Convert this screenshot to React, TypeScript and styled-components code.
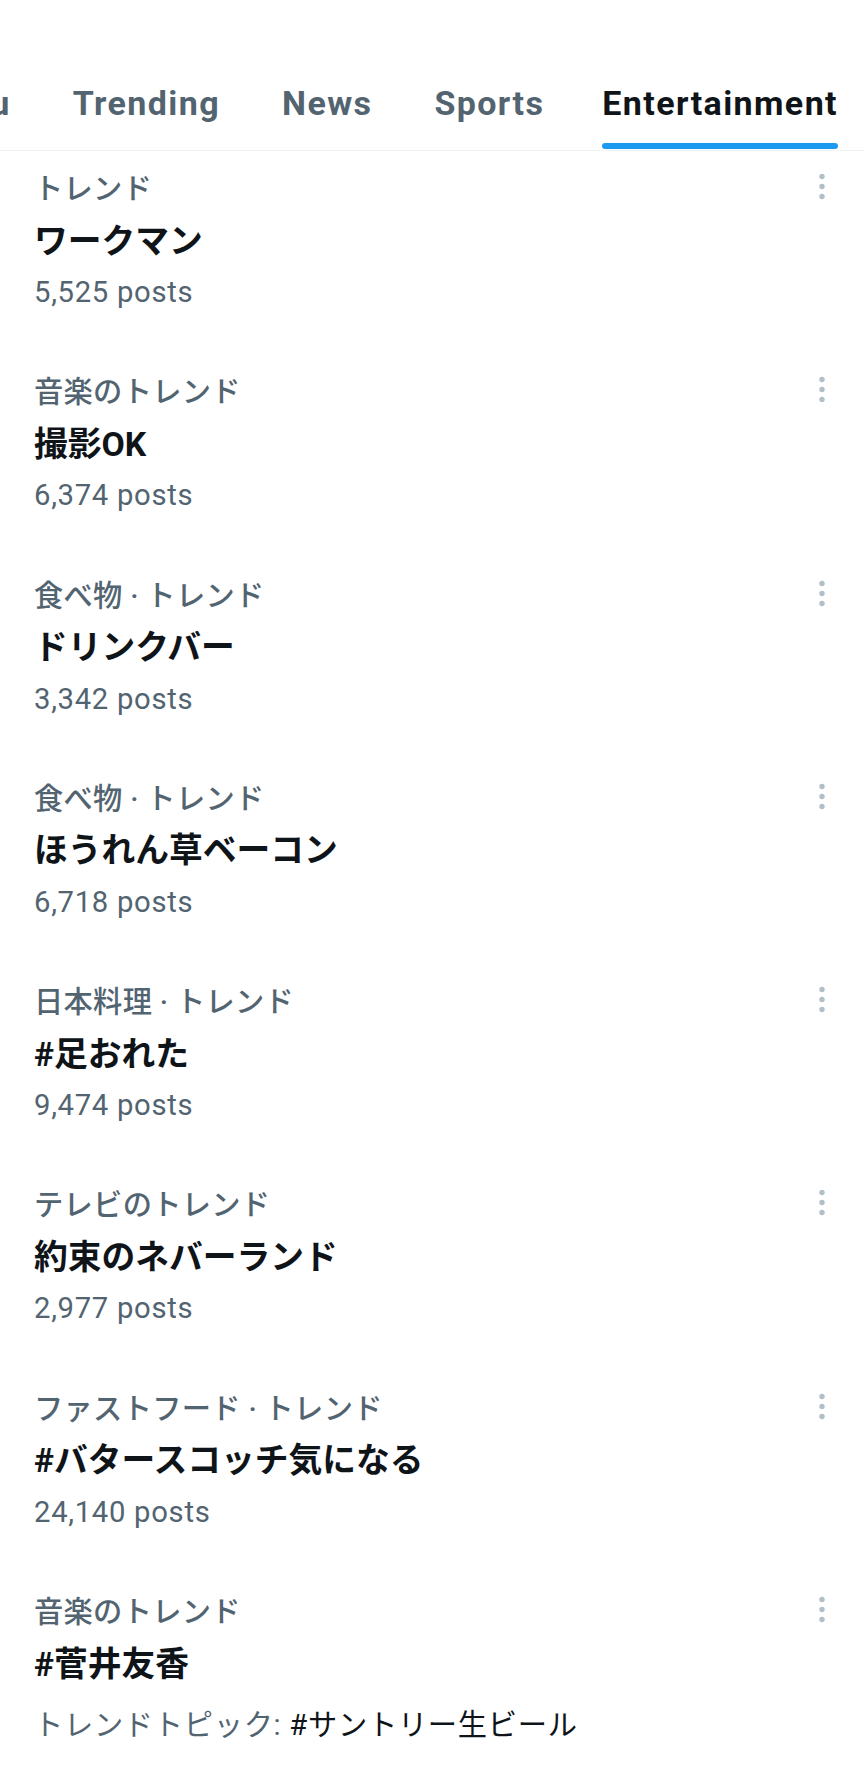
import React from 'react'
import styled, { createGlobalStyle } from 'styled-components'

const GlobalStyle = createGlobalStyle`
  body {
    margin: 0;
    background: #ffffff;
    font-family: Roboto, "Noto Sans CJK JP", sans-serif;
    -webkit-font-smoothing: antialiased;
  }
`

const Page = styled.div`
  width: 864px;
  min-height: 1782px;
  background: #ffffff;
  overflow: hidden;
`

const TabBar = styled.nav`
  height: 150px;
  border-bottom: 1px solid #eff3f4;
  display: flex;
  justify-content: flex-end;
  overflow: hidden;
`

const Tab = styled.div`
  flex-shrink: 0;
  display: flex;
  flex-direction: column;
  justify-content: flex-end;
  padding: 0 31px;
  &:last-child {
    padding-left: 27px;
    padding-right: 26px;
  }
`

const TabInner = styled.div`
  display: flex;
  flex-direction: column;
  align-items: stretch;
`

const TabLabel = styled.span<{ $active?: boolean }>`
  font-family: Roboto, "Noto Sans CJK JP", sans-serif;
  font-size: 34px;
  line-height: 46px;
  font-weight: 700;
  letter-spacing: 1.4px;
  white-space: nowrap;
  color: ${p => (p.$active ? '#0f1419' : '#536471')};
`

const Indicator = styled.div<{ $active?: boolean }>`
  margin-top: 17px;
  height: 6px;
  margin-bottom: 1px;
  border-radius: 3px;
  background: ${p => (p.$active ? '#1d9bf0' : 'transparent')};
`

const List = styled.div`
  display: flex;
  flex-direction: column;
`

const Row = styled.div`
  display: flex;
  align-items: flex-start;
  padding: 20px 30px 44.3px 34px;
`

const Body = styled.div`
  flex: 1;
  display: flex;
  flex-direction: column;
`

const Category = styled.div`
  font-size: 29.25px;
  line-height: 36px;
  font-weight: 500;
  color: #536471;
  letter-spacing: 0.3px;
  white-space: nowrap;
`

const Title = styled.div`
  margin-top: 11.5px;
  font-size: 33.75px;
  line-height: 45px;
  font-weight: 700;
  color: #0f1419;
  white-space: nowrap;
`

const Meta = styled.div<{ $topic?: boolean }>`
  margin-top: ${p => (p.$topic ? '20.5px' : '10.5px')};
  font-size: 29.25px;
  line-height: 36px;
  color: #536471;
  letter-spacing: 0.7px;
  white-space: nowrap;
`

const TopicName = styled.span`
  color: #0f1419;
`

const MoreButton = styled.button`
  flex-shrink: 0;
  width: 24px;
  height: 32px;
  padding: 0;
  border: none;
  background: transparent;
  display: flex;
  align-items: flex-start;
  justify-content: center;
  svg {
    display: block;
  }
`

function MoreIcon() {
  return (
    <svg width="24" height="32" viewBox="0 0 24 32" fill="#b1bfc9">
      <circle cx="12" cy="5.5" r="2.7" />
      <circle cx="12" cy="15.5" r="2.7" />
      <circle cx="12" cy="25.5" r="2.7" />
    </svg>
  )
}

const tabs = [
  { label: 'For you' },
  { label: 'Trending' },
  { label: 'News' },
  { label: 'Sports' },
  { label: 'Entertainment', active: true },
]

interface Trend {
  category: string
  title: string
  posts?: string
  topic?: string
}

const trends: Trend[] = [
  { category: 'トレンド', title: 'ワークマン', posts: '5,525 posts' },
  { category: '音楽のトレンド', title: '撮影OK', posts: '6,374 posts' },
  { category: '食べ物 · トレンド', title: 'ドリンクバー', posts: '3,342 posts' },
  { category: '食べ物 · トレンド', title: 'ほうれん草ベーコン', posts: '6,718 posts' },
  { category: '日本料理 · トレンド', title: '#足おれた', posts: '9,474 posts' },
  { category: 'テレビのトレンド', title: '約束のネバーランド', posts: '2,977 posts' },
  { category: 'ファストフード · トレンド', title: '#バタースコッチ気になる', posts: '24,140 posts' },
  { category: '音楽のトレンド', title: '#菅井友香', topic: '#サントリー生ビール' },
]

export default function App() {
  return (
    <Page>
      <GlobalStyle />
      <TabBar>
        {tabs.map(tab => (
          <Tab key={tab.label}>
            <TabInner>
              <TabLabel $active={tab.active}>{tab.label}</TabLabel>
              <Indicator $active={tab.active} />
            </TabInner>
          </Tab>
        ))}
      </TabBar>
      <List>
        {trends.map((trend, i) => (
          <Row key={i}>
            <Body>
              <Category>{trend.category}</Category>
              <Title>{trend.title}</Title>
              {trend.topic ? (
                <Meta $topic>
                  トレンドトピック: <TopicName>{trend.topic}</TopicName>
                </Meta>
              ) : (
                <Meta>{trend.posts}</Meta>
              )}
            </Body>
            <MoreButton aria-label="More">
              <MoreIcon />
            </MoreButton>
          </Row>
        ))}
      </List>
    </Page>
  )
}
